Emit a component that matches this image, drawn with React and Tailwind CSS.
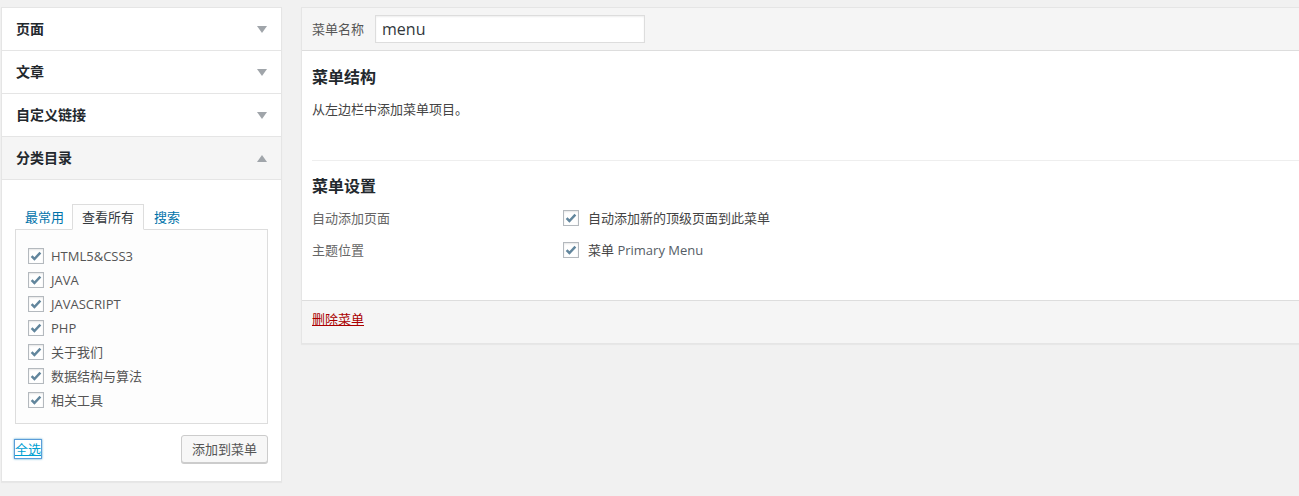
import React from "react";

const FONT = { fontFamily: '"Open Sans", "Noto Sans CJK SC", "Liberation Sans", sans-serif' };

function Check() {
  return (
    <span className="inline-flex items-center justify-center w-[16px] h-[16px] border border-[#b4b9be] bg-white shadow-[inset_0_1px_2px_rgba(0,0,0,0.1)] shrink-0">
      <svg width="14" height="14" viewBox="0 0 14 14">
        <path d="M2.6 7.2 L5.4 10 L11.4 3.6" fill="none" stroke="#62869d" strokeWidth="2.5" strokeLinejoin="miter" />
      </svg>
    </span>
  );
}

function Arrow({ up }) {
  return (
    <svg width="10" height="7" viewBox="0 0 10 7" className="shrink-0">
      {up ? <path d="M0 7 L5 0 L10 7 Z" fill="#a0a5aa" /> : <path d="M0 0 L10 0 L5 7 Z" fill="#a0a5aa" />}
    </svg>
  );
}

function Row({ label, active }) {
  return (
    <div className={`h-[43px] border-b border-[#e5e5e5] flex items-center justify-between pl-[14px] pr-[14px] ${active ? "bg-[#f5f5f5]" : "bg-white"}`}>
      <span className="text-[14px] font-bold text-[#23282d] leading-[20px]">{label}</span>
      <Arrow up={active} />
    </div>
  );
}

const items = ["HTML5&CSS3", "JAVA", "JAVASCRIPT", "PHP", "关于我们", "数据结构与算法", "相关工具"];

export default function App() {
  return (
    <div className="w-[1299px] h-[496px] overflow-hidden bg-[#f1f1f1] flex items-start" style={FONT}>
      {/* Left accordion */}
      <div className="ml-[1px] mt-[7px] w-[281px] shrink-0 border border-[#e5e5e5] bg-white shadow-[0_1px_1px_rgba(0,0,0,0.04)]">
        <Row label="页面" />
        <Row label="文章" />
        <Row label="自定义链接" />
        <Row label="分类目录" active />
        <div className="pt-[24px] pl-[13px] pr-[12px] pb-[18px]">
          <div className="flex text-[13px] leading-[24px] relative z-10 -mb-px">
            <span className="pl-[9px] pr-[7px] border border-transparent text-[#0073aa] h-[26px] flex items-center">最常用</span>
            <span className="px-[9px] border border-[#dddddd] border-b-[#fdfdfd] bg-[#fdfdfd] text-[#32373c] h-[26px] flex items-center">查看所有</span>
            <span className="px-[9px] border border-transparent text-[#0073aa] h-[26px] flex items-center">搜索</span>
          </div>
          <div className="border border-[#dddddd] bg-[#fdfdfd] pl-[12px] pt-[14px] pb-[11px] mr-[1px]">
            {items.map((t) => (
              <div key={t} className="h-[24px] flex items-center gap-[7px]">
                <Check />
                <span className="text-[13px] text-[#555555] leading-[20px]">{t}</span>
              </div>
            ))}
          </div>
          <div className="flex items-center justify-between mt-[11px]">
            <a href="#" className="text-[13px] leading-[18px] text-[#00a0d2] underline shadow-[0_0_0_1px_#5b9dd9,0_0_2px_1px_rgba(30,140,190,0.8)]">全选</a>
            <button className="mr-[1px] h-[28px] px-[10px] bg-[#f7f7f7] border border-[#cccccc] rounded-[3px] shadow-[0_1px_0_#cccccc] text-[13px] text-[#555555] leading-[26px]" style={FONT}>添加到菜单</button>
          </div>
        </div>
      </div>

      {/* Right panel */}
      <div className="ml-[19px] mt-[7px] w-[1010px] shrink-0 border border-[#e5e5e5] bg-white shadow-[0_1px_1px_rgba(0,0,0,0.04)]">
        <div className="h-[43px] bg-[#f5f5f5] border-b border-[#dddddd] flex items-center pl-[10px]">
          <span className="text-[13px] text-[#555555] leading-[20px]">菜单名称</span>
          <div className="ml-[11px] w-[270px] h-[28px] border border-[#dddddd] bg-white shadow-[inset_0_1px_2px_rgba(0,0,0,0.07)] flex items-center pl-[6px]">
            <span className="text-[16px] text-[#32373c] leading-[20px]">menu</span>
          </div>
        </div>
        <div className="h-[249px] pl-[10px] pt-[15px]">
          <h3 className="text-[16px] font-semibold text-[#23282d] leading-[22px]">菜单结构</h3>
          <p className="mt-[11px] text-[13px] text-[#444444] leading-[20px]">从左边栏中添加菜单项目。</p>
          <div className="mt-[41px] h-px bg-[#eeeeee]" />
          <h3 className="mt-[14px] text-[16px] font-semibold text-[#23282d] leading-[22px]">菜单设置</h3>
          <div className="mt-[11px] flex items-center h-[20px]">
            <span className="w-[251px] text-[13px] text-[#666666] leading-[20px]">自动添加页面</span>
            <Check />
            <span className="ml-[9px] text-[13px] text-[#444444] leading-[20px]">自动添加新的顶级页面到此菜单</span>
          </div>
          <div className="mt-[12px] flex items-center h-[20px]">
            <span className="w-[251px] text-[13px] text-[#666666] leading-[20px]">主题位置</span>
            <Check />
            <span className="ml-[9px] text-[13px] text-[#444444] leading-[20px]">菜单 <span className="text-[#555d66]">Primary Menu</span></span>
          </div>
        </div>
        <div className="h-[43px] bg-[#f5f5f5] border-t border-[#dddddd] pl-[10px] pt-[8px]">
          <a href="#" className="block w-fit text-[13px] text-[#aa0000] underline leading-[20px]">删除菜单</a>
        </div>
      </div>
    </div>
  );
}
